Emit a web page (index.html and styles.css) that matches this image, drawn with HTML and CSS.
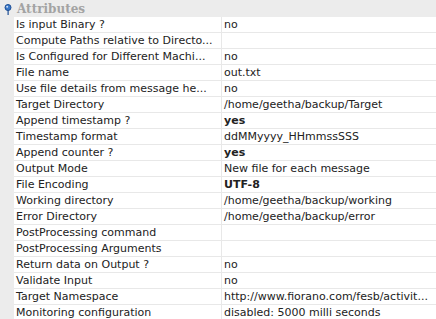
FILE: index.html
```html
<!DOCTYPE html>
<html>
<head>
<meta charset="utf-8">
<link rel="stylesheet" href="styles.css">
</head>
<body>
<div class="sheet">
  <div class="header">
    <span class="pin"><svg width="8" height="11" viewBox="0 0 8 11"><circle cx="4" cy="3.5" r="3" fill="#3a78c8" stroke="#1f4f95" stroke-width="1"/><circle cx="3.2" cy="2.8" r="1" fill="#cfe0f7"/><rect x="3.5" y="6" width="1.2" height="5" fill="#1f4f95"/></svg></span>
    <span class="title">Attributes</span>
  </div>
  <div class="rows">
    <div class="row"><div class="gut"></div><div class="name">Is input Binary ?</div><div class="val">no</div></div>
    <div class="row"><div class="gut"></div><div class="name">Compute Paths relative to Directo...</div><div class="val"></div></div>
    <div class="row"><div class="gut"></div><div class="name">Is Configured for Different Machi...</div><div class="val">no</div></div>
    <div class="row"><div class="gut"></div><div class="name">File name</div><div class="val">out.txt</div></div>
    <div class="row"><div class="gut"></div><div class="name">Use file details from message he...</div><div class="val">no</div></div>
    <div class="row"><div class="gut"></div><div class="name">Target Directory</div><div class="val">/home/geetha/backup/Target</div></div>
    <div class="row"><div class="gut"></div><div class="name">Append timestamp ?</div><div class="val bold">yes</div></div>
    <div class="row"><div class="gut"></div><div class="name">Timestamp format</div><div class="val">ddMMyyyy_HHmmssSSS</div></div>
    <div class="row"><div class="gut"></div><div class="name">Append counter ?</div><div class="val bold">yes</div></div>
    <div class="row"><div class="gut"></div><div class="name">Output Mode</div><div class="val">New file for each message</div></div>
    <div class="row"><div class="gut"></div><div class="name">File Encoding</div><div class="val bold">UTF-8</div></div>
    <div class="row"><div class="gut"></div><div class="name">Working directory</div><div class="val">/home/geetha/backup/working</div></div>
    <div class="row"><div class="gut"></div><div class="name">Error Directory</div><div class="val">/home/geetha/backup/error</div></div>
    <div class="row"><div class="gut"></div><div class="name">PostProcessing command</div><div class="val"></div></div>
    <div class="row"><div class="gut"></div><div class="name">PostProcessing Arguments</div><div class="val"></div></div>
    <div class="row"><div class="gut"></div><div class="name">Return data on Output ?</div><div class="val">no</div></div>
    <div class="row"><div class="gut"></div><div class="name">Validate Input</div><div class="val">no</div></div>
    <div class="row"><div class="gut"></div><div class="name">Target Namespace</div><div class="val">http://www.fiorano.com/fesb/activit...</div></div>
    <div class="row"><div class="gut"></div><div class="name">Monitoring configuration</div><div class="val">disabled: 5000 milli seconds</div></div>
  </div>
</div>
</body>
</html>
```
FILE: styles.css
```css
html, body {
  margin: 0;
  padding: 0;
  background: #ffffff;
  overflow: hidden;
}
.sheet {
  width: 436px;
  height: 319px;
  overflow: hidden;
  font-family: "DejaVu Sans", sans-serif;
  font-size: 11px;
  color: #222222;
}
.header {
  height: 17px;
  background: #ececec;
  display: flex;
  align-items: center;
}
.pin {
  width: 8px;
  margin-left: 4px;
  display: flex;
  margin-top: 1px;
}
.title {
  margin-left: 5px;
  font-weight: bold;
  color: #a3a3a3;
  font-size: 12px;
  font-family: "DejaVu Serif", serif;
}
.row {
  display: grid;
  grid-template-columns: 14px 208px 1fr;
  height: 16px;
}
.gut {
  background: #ececec;
}
.name, .val {
  border-bottom: 1px solid #e8e8e8;
  white-space: nowrap;
  overflow: hidden;
  line-height: 15px;
  padding-left: 2px;
}
.name {
  border-right: 1px solid #e8e8e8;
}
.bold {
  font-weight: bold;
}
```
